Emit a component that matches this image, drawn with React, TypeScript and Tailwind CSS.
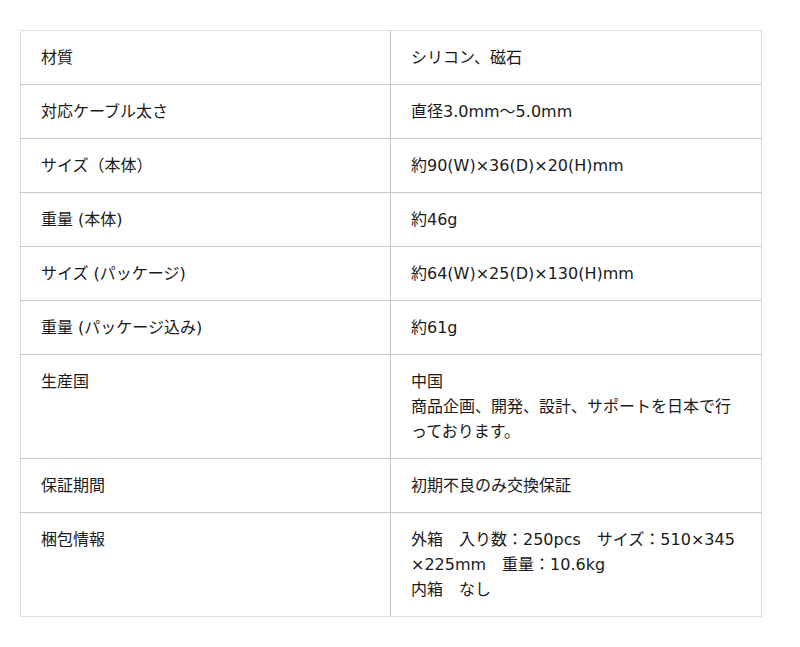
const rows: { label: string; value: string[] }[] = [
  { label: '材質', value: ['シリコン、磁石'] },
  { label: '対応ケーブル太さ', value: ['直径3.0mm～5.0mm'] },
  { label: 'サイズ（本体）', value: ['約90(W)×36(D)×20(H)mm'] },
  { label: '重量 (本体)', value: ['約46g'] },
  { label: 'サイズ (パッケージ)', value: ['約64(W)×25(D)×130(H)mm'] },
  { label: '重量 (パッケージ込み)', value: ['約61g'] },
  { label: '生産国', value: ['中国', '商品企画、開発、設計、サポートを日本で行', 'っております。'] },
  { label: '保証期間', value: ['初期不良のみ交換保証'] },
  {
    label: '梱包情報',
    value: ['外箱　入り数：250pcs　サイズ：510×345', '×225mm　重量：10.6kg', '内箱　なし'],
  },
];

export default function App() {
  return (
    <div
      className="min-h-[647px] bg-white pt-[30px] pl-[20px]"
      style={{ fontFamily: '"DejaVu Sans", "Noto Sans CJK JP", sans-serif' }}
    >
      <table className="w-[742px] border-collapse border border-[#e0e0e0] text-[16px] leading-[25px] text-[#1a1a1a]">
        <tbody>
          {rows.map((row, i) => (
            <tr key={i} className="border-t border-[#c8c8c8] first:border-t-0">
              <td className="w-[370px] border-r border-[#c8c8c8] px-[20px] py-[14px] align-top">
                {row.label}
              </td>
              <td className="px-[20px] py-[14px] align-top whitespace-nowrap">
                {row.value.map((line, j) => (
                  <div key={j}>{line}</div>
                ))}
              </td>
            </tr>
          ))}
        </tbody>
      </table>
    </div>
  );
}
